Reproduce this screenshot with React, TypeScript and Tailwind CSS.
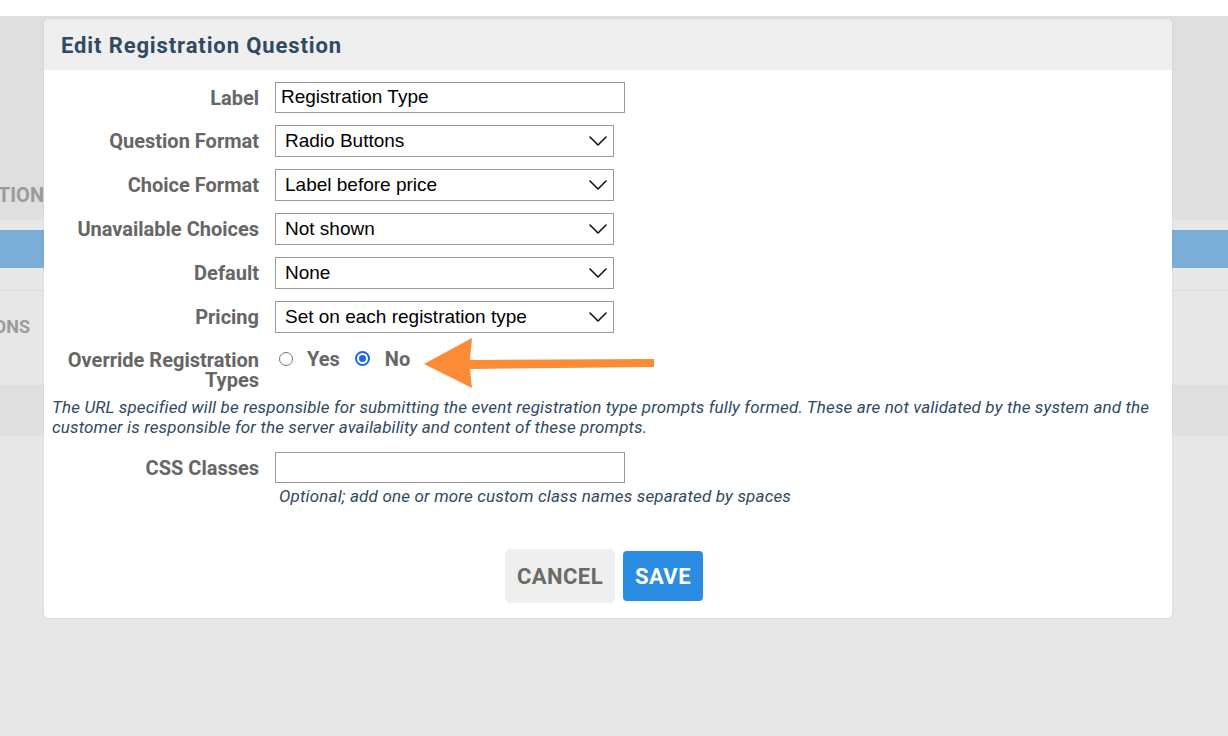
import React from "react";

const labelFont = { fontFamily: "Roboto, 'Liberation Sans', sans-serif" };

function Chevron() {
  return (
    <svg width="18" height="10" viewBox="0 0 18 10" className="shrink-0">
      <polyline points="1,1 9,9 17,1" fill="none" stroke="#111" strokeWidth="1.6" strokeLinecap="round" strokeLinejoin="round" />
    </svg>
  );
}

function Row({ label, children }: { label: React.ReactNode; children: React.ReactNode }) {
  return (
    <div className="flex items-center gap-4">
      <div className="w-[207px] shrink-0 text-right text-[20px] font-bold text-[#666666] leading-5">{label}</div>
      {children}
    </div>
  );
}

function SelectBox({ value }: { value: string }) {
  return (
    <div className="w-[339px] h-[32px] border border-[#9a9a9a] bg-white flex items-center justify-between pl-[9px] pr-[6px] text-[19px] text-black font-['Liberation_Sans',Arial,sans-serif]">
      <span>{value}</span>
      <Chevron />
    </div>
  );
}

function TextBox({ value }: { value: string }) {
  return (
    <div className="w-[350px] h-[31px] border border-[#9a9a9a] bg-white flex items-center pl-[5px] text-[19px] text-black font-['Liberation_Sans',Arial,sans-serif]">
      {value}
    </div>
  );
}

function Radio({ checked }: { checked?: boolean }) {
  return checked ? (
    <span className="w-[15px] h-[15px] rounded-full border-[2px] border-[#1769e8] bg-white flex items-center justify-center">
      <span className="w-[7px] h-[7px] rounded-full bg-[#1769e8]" />
    </span>
  ) : (
    <span className="w-[14px] h-[14px] rounded-full border border-[#777777] bg-white" />
  );
}

export default function App() {
  return (
    <div className="relative w-full h-[736px] overflow-hidden bg-[#e7e7e7]" style={labelFont}>
      {/* page behind the dialog */}
      <div className="h-[16px] bg-white" />
      <div className="h-[204px] bg-[#dfdfdf] flex flex-col justify-end pb-[10px]">
        <div className="w-[44px] overflow-hidden flex justify-end">
          <span className="whitespace-nowrap text-[20px] font-bold text-[#9b9b9b]">REGISTRATION</span>
        </div>
      </div>
      <div className="h-[10px]" />
      <div className="h-[38px] bg-[#7aaed9]" />
      <div className="h-[22px]" />
      <div className="h-px bg-[#dcdcdc]" />
      <div className="h-[94px] pt-[22px]">
        <div className="w-[30px] overflow-hidden flex justify-end">
          <span className="whitespace-nowrap text-[18px] font-bold text-[#9b9b9b]">QUESTIONS</span>
        </div>
      </div>
      <div className="h-[51px] bg-[#dfdfdf]" />

      {/* dialog */}
      <div className="absolute left-[44px] top-[19px] w-[1128px] h-[599px] bg-white rounded-[5px] shadow-[0_0_2px_rgba(0,0,0,0.12)] overflow-hidden flex flex-col">
        <div className="h-[51px] bg-[#efefef] flex items-center pl-[17px] pt-[2px]">
          <h2 className="text-[22px] font-bold tracking-[0.04em] text-[#2f4a62]">Edit Registration Question</h2>
        </div>

        <div className="flex flex-col pl-[8px] pt-[12px]">
          <div className="flex flex-col gap-[12px]">
            <Row label="Label">
              <TextBox value="Registration Type" />
            </Row>
            <Row label="Question Format">
              <SelectBox value="Radio Buttons" />
            </Row>
            <Row label="Choice Format">
              <SelectBox value="Label before price" />
            </Row>
            <Row label="Unavailable Choices">
              <SelectBox value="Not shown" />
            </Row>
            <Row label="Default">
              <SelectBox value="None" />
            </Row>
            <Row label="Pricing">
              <SelectBox value="Set on each registration type" />
            </Row>
          </div>

          <div className="flex items-start gap-4 mt-[17px]">
            <div className="w-[207px] shrink-0 text-right text-[20px] font-bold text-[#666666] leading-5">
              Override Registration Types
            </div>
            <div className="flex items-center h-[17px] pl-[4px] text-[20px] font-bold text-[#666666]">
              <Radio />
              <span className="ml-[14px]">Yes</span>
              <span className="ml-[15px]"><Radio checked /></span>
              <span className="ml-[15px]">No</span>
            </div>
          </div>

          <p className="mt-[7px] pr-[4px] text-[17px] leading-5 italic tracking-[0.008em] text-[#2f4a62]">
            The URL specified will be responsible for submitting the event registration type prompts fully formed. These are not validated by the system and the customer is responsible for the server availability and content of these prompts.
          </p>

          <div className="mt-[15px]">
            <Row label="CSS Classes">
              <TextBox value="" />
            </Row>
          </div>
          <p className="mt-[3px] ml-[227px] text-[17px] leading-5 italic tracking-[0.01em] text-[#2f4a62]">
            Optional; add one or more custom class names separated by spaces
          </p>
        </div>

        <div className="mt-auto pb-[15px] flex justify-center items-center gap-2 pr-[8px]">
          <button className="h-[54px] px-[12px] rounded-[5px] bg-[#efefef] text-[22px] font-bold tracking-[0.02em] text-[#6b6b66]">CANCEL</button>
          <button className="h-[50px] px-[12px] rounded-[4px] bg-[#2b8ce3] text-[22px] font-bold tracking-[0.02em] text-white">SAVE</button>
        </div>
      </div>

      {/* pointer arrow */}
      <svg className="absolute left-[420px] top-[334px]" width="240" height="56" viewBox="0 0 240 56">
        <polygon points="4,30 52,4 50,26 234,25 234,33 50,35 52,54" fill="#fb8b35" />
      </svg>
    </div>
  );
}
